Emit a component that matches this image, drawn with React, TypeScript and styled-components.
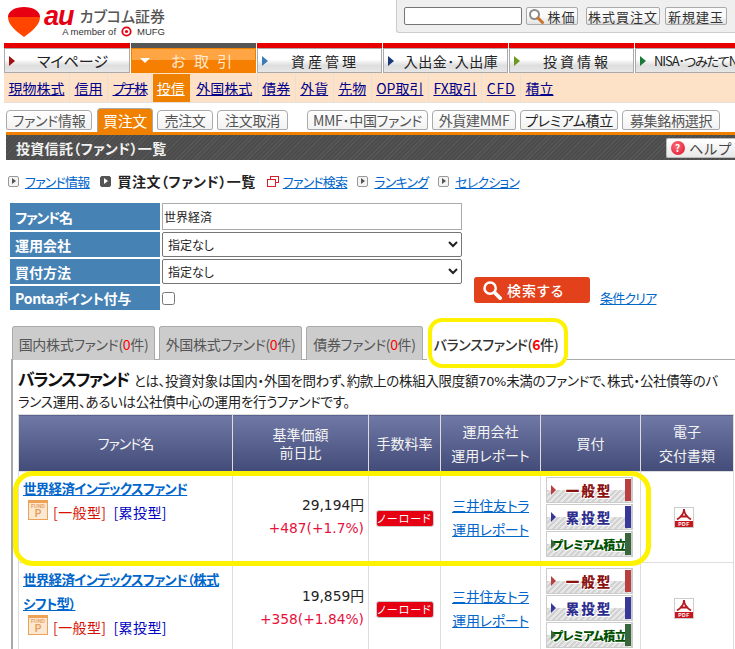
import React from 'react';
import styled, { createGlobalStyle } from 'styled-components';

const GlobalStyle = createGlobalStyle`
  html, body {
    margin: 0;
    padding: 0;
    background: #fff;
    overflow: hidden;
  }
  body {
    font-family: "Noto Sans CJK JP", "Liberation Sans", sans-serif;
    font-feature-settings: "palt";
    font-size: 14px;
    color: #222;
  }
  * {
    box-sizing: border-box;
  }
`;

const Page = styled.div`
  width: 735px;
  height: 649px;
  overflow: hidden;
`;

const Header = styled.header`
  height: 43px;
  display: flex;
  justify-content: space-between;
  align-items: flex-start;
  padding-left: 8px;
`;

const Logo = styled.div`
  display: flex;
  gap: 4px;
  padding-top: 7px;
`;

const LogoText = styled.div`
  display: flex;
  flex-direction: column;
  align-items: flex-end;
  width: 121px;
`;

const BrandRow = styled.div`
  display: flex;
  align-items: center;
  height: 18px;
  width: 100%;
  justify-content: space-between;
`;

const AuMark = styled.span`
  font-family: "Liberation Sans", sans-serif;
  font-size: 27px;
  font-style: italic;
  font-weight: 700;
  line-height: 18px;
  letter-spacing: -1px;
  color: #e60012;
`;

const BrandName = styled.span`
  font-size: 15px;
  font-weight: 500;
  color: #555;
  line-height: 18px;
`;

const MemberRow = styled.div`
  display: flex;
  align-items: center;
  gap: 3px;
  margin-top: 1px;
  font-family: "Liberation Sans", sans-serif;
  font-size: 9.5px;
  line-height: 11px;
  color: #333;
`;

const SearchPanel = styled.div`
  width: 339px;
  height: 33px;
  display: flex;
  align-items: flex-start;
  padding: 7px 0 0 7px;
  background: #efefef;
  border-left: 1px solid #ccc;
  border-bottom: 1px solid #ccc;
  border-bottom-left-radius: 3px;
`;

const CodeInput = styled.input`
  width: 118px;
  height: 18px;
  padding: 0 3px;
  background: #fff;
  border: 1px solid #767676;
  border-radius: 2px;
`;

const PanelButton = styled.div<{ $left: number; $width: number }>`
  display: flex;
  align-items: center;
  justify-content: center;
  gap: 3px;
  width: ${(p) => p.$width}px;
  height: 18px;
  margin-left: ${(p) => p.$left}px;
  font-size: 13px;
  letter-spacing: 1px;
  color: #333;
  background: linear-gradient(#fafafa 50%, #e2e2e2);
  border: 1px solid #aaa;
  border-radius: 2px;
`;

const MainNav = styled.nav`
  display: flex;
  gap: 1px;
  height: 30px;
  padding-left: 4px;
`;

const NavItem = styled.div<{ $active?: boolean }>`
  position: relative;
  flex: 0 0 125px;
  display: flex;
  align-items: center;
  gap: 8px;
  padding-left: 5px;
  border-top: 5px solid ${(p) => (p.$active ? '#555' : '#e60000')};
  box-shadow: inset 0 0 0 1px ${(p) => (p.$active ? '#f08000' : '#aaa')};
  background: ${(p) =>
    p.$active
      ? 'linear-gradient(#ffa544 50%, #f67f02 50%)'
      : 'linear-gradient(#fff, #fff 45%, #dedede 70%, #e8e8e8)'};

  &:first-child {
    flex-basis: 126px;
  }
`;

const NavArrow = styled.span<{ $color: string; $down?: boolean }>`
  flex: none;
  width: 0;
  height: 0;
  border-style: solid;
  ${(p) =>
    p.$down
      ? `border-width: 5px 5px 0 5px; border-color: ${p.$color} transparent transparent transparent; margin-left: 4px;`
      : `border-width: 5px 0 5px 6px; border-color: transparent transparent transparent ${p.$color};`}
`;

const NavLabel = styled.span<{ $active?: boolean; $spacing: number; $size: number }>`
  flex: 1;
  text-align: center;
  white-space: nowrap;
  padding-right: 8px;
  font-size: ${(p) => p.$size}px;
  letter-spacing: ${(p) => p.$spacing}px;
  color: ${(p) => (p.$active ? '#ffe9d0' : '#222')};
`;

const SubNav = styled.div`
  display: flex;
  align-items: center;
  height: 30px;
  margin-left: 4px;
  background: #fde2c8;
  border-bottom: 1px solid #e8e0d8;
`;

const SubItem = styled.a<{ $active?: boolean; $spacing?: number }>`
  display: flex;
  align-items: center;
  height: 28px;
  margin: 0 ${(p) => (p.$active ? '2px 0 1px' : '0')};
  padding: 0 ${(p) => (p.$active ? 4 : 4.5)}px;
  border-right: 1px solid ${(p) => (p.$active ? 'transparent' : '#e6e0da')};
  font-size: 14px;
  letter-spacing: ${(p) => p.$spacing ?? 0}px;
  text-decoration: underline;
  white-space: nowrap;
  color: ${(p) => (p.$active ? '#fff' : '#00008b')};
  background: ${(p) => (p.$active ? '#f08000' : 'transparent')};

  &:last-child {
    border-right: none;
  }
`;

const SubTabs = styled.div`
  display: flex;
  align-items: flex-end;
  height: 29px;
  padding-left: 6px;
`;

const SubTab = styled.div<{ $active?: boolean; $width: number; $gapLeft?: number; $dark?: boolean }>`
  display: flex;
  align-items: center;
  justify-content: center;
  width: ${(p) => p.$width}px;
  height: ${(p) => (p.$active ? 24 : 20)}px;
  margin-left: ${(p) => p.$gapLeft ?? 4}px;
  margin-bottom: ${(p) => (p.$active ? 0 : 2)}px;
  font-size: ${(p) => (p.$active ? 15 : 14)}px;
  letter-spacing: -0.3px;
  white-space: nowrap;
  color: ${(p) => (p.$active ? '#fff' : p.$dark ? '#222' : '#555')};
  background: ${(p) => (p.$active ? '#f08000' : 'linear-gradient(#fff, #f2f2f2)')};
  border: 1px solid #aaa;
  border-bottom: ${(p) => (p.$active ? 'none' : '1px solid #aaa')};
  border-radius: 4px ${(p) => (p.$active ? '4px 0 0' : '4px 2px 2px')};

  &:first-child {
    margin-left: 0;
  }
`;

const TitleBar = styled.div`
  display: flex;
  align-items: center;
  justify-content: space-between;
  height: 28px;
  margin-left: 6px;
  padding-left: 10px;
  border-top: 3px solid #f08000;
  background: repeating-linear-gradient(135deg, #4c4c4c 0 2px, #575757 2px 3px);
`;

const PageTitle = styled.h1`
  margin: 0;
  font-size: 14px;
  font-weight: 700;
  letter-spacing: 0.3px;
  color: #f2f2f2;
`;

const HelpButton = styled.div`
  display: flex;
  align-items: center;
  gap: 4px;
  width: 69px;
  height: 20px;
  padding-left: 4px;
  font-size: 14px;
  letter-spacing: 1px;
  white-space: nowrap;
  color: #444;
  background: linear-gradient(#fff, #e8e8e8);
  border: 1px solid #bbb;
  border-right: none;
  border-radius: 2px 0 0 2px;
`;

const HelpDot = styled.span`
  display: flex;
  align-items: center;
  justify-content: center;
  width: 14px;
  height: 14px;
  font-size: 10px;
  font-weight: 700;
  color: #fff;
  background: radial-gradient(circle at 40% 35%, #ff6b7a, #d8102a);
  border-radius: 50%;
`;

const Breadcrumbs = styled.div`
  display: flex;
  align-items: center;
  height: 43px;
  padding: 0 0 1px 8px;
  white-space: nowrap;
`;

const CrumbIcon = styled.span<{ $dark?: boolean; $left: number }>`
  display: flex;
  align-items: center;
  justify-content: center;
  width: 11px;
  height: 11px;
  margin: 0 6px 0 ${(p) => p.$left}px;
  background: ${(p) => (p.$dark ? '#555' : '#f4f4f4')};
  border: 1px solid ${(p) => (p.$dark ? '#555' : '#999')};
  border-radius: 2px;

  &::after {
    content: '';
    border-style: solid;
    border-width: 3px 0 3px 4px;
    border-color: transparent transparent transparent ${(p) => (p.$dark ? '#fff' : '#555')};
  }
`;

const WindowIcon = styled.svg`
  flex: none;
  margin: 0 4px 0 11px;
`;

const TextLink = styled.a`
  font-size: 13px;
  letter-spacing: -0.8px;
  color: #0066cc;
  text-decoration: underline;
`;

const CrumbCurrent = styled.b`
  font-size: 14px;
  font-weight: 700;
  letter-spacing: 0.5px;
  color: #222;
`;

const FormArea = styled.div`
  display: flex;
  padding-left: 10px;
`;

const FormGrid = styled.div`
  display: grid;
  grid-template-columns: 150px 300px;
  grid-template-rows: 27px 25px 25px 24px;
  column-gap: 2px;
  row-gap: 2px;
`;

const FieldLabel = styled.div<{ $spacing?: number }>`
  display: flex;
  align-items: center;
  padding-left: 5px;
  font-size: 14px;
  font-weight: 700;
  letter-spacing: ${(p) => p.$spacing ?? 0}px;
  color: #fff;
  background: #4682b4;
`;

const TextField = styled.input`
  width: 100%;
  height: 100%;
  padding: 0 1px;
  font: inherit;
  font-size: 12px;
  color: #222;
  border: 1px solid #aaa;
  outline: none;
`;

const SelectField = styled.select`
  width: 100%;
  height: 100%;
  padding: 0 0 0 1px;
  font: inherit;
  font-size: 12px;
  color: #222;
  background: #fff;
  border: 1px solid #767676;
  border-radius: 2px;
`;

const CheckCell = styled.div`
  display: flex;
  align-items: center;
`;

const CheckBox = styled.input`
  width: 13px;
  height: 13px;
  margin: 0;
`;

const SearchButton = styled.div`
  display: flex;
  align-items: center;
  gap: 5px;
  width: 116px;
  height: 26px;
  margin: 74px 0 0 12px;
  padding-left: 8px;
  font-size: 14px;
  font-weight: 500;
  letter-spacing: 1px;
  color: #fff;
  background: #e2411c;
  border-radius: 3px;
`;

const ClearLink = styled(TextLink)`
  margin: 85px 0 0 10px;
  white-space: nowrap;
`;

const FundTabs = styled.div`
  display: flex;
  gap: 4px;
  margin-top: 16px;
  padding-left: 12px;
`;

const FundTab = styled.div<{ $active?: boolean; $width: number }>`
  position: relative;
  z-index: 1;
  display: flex;
  align-items: center;
  justify-content: center;
  width: ${(p) => p.$width}px;
  height: 34px;
  margin-bottom: -1px;
  font-size: 14px;
  font-weight: ${(p) => (p.$active ? 500 : 400)};
  letter-spacing: -0.35px;
  white-space: nowrap;
  color: ${(p) => (p.$active ? '#333' : '#555')};
  background: ${(p) => (p.$active ? '#fff' : '#ccc')};
  border: 1px solid ${(p) => (p.$active ? 'transparent' : '#aaa')};
  border-bottom: none;
  border-radius: 3px 3px 0 0;
`;

const RedCount = styled.span<{ $bold?: boolean }>`
  font-weight: ${(p) => (p.$bold ? 700 : 400)};
  color: #f00;
`;

const TabCallout = styled.span`
  position: absolute;
  top: -9px;
  right: -4px;
  bottom: -8px;
  left: 0;
  border: 4px solid #fff200;
  border-radius: 14px;
  pointer-events: none;
`;

const Panel = styled.section`
  margin-left: 11px;
  padding: 10px 0 0 5px;
  border-top: 1px solid #aaa;
  border-left: 2px solid #aaa;
`;

const Intro = styled.p`
  margin: 0 0 2px;
  font-size: 13.5px;
  letter-spacing: -0.3px;
  line-height: 21px;
  white-space: nowrap;
  overflow: hidden;
`;

const IntroTitle = styled.b`
  font-size: 17px;
  font-weight: 700;
  line-height: 1;
  letter-spacing: -1.5px;
  margin-right: 5px;
  color: #111;
`;

const IntroLatin = styled.span`
  font-family: "DejaVu Sans", sans-serif;
  font-size: 13px;
  line-height: 1;
`;

const TableWrap = styled.div`
  position: relative;
`;

const FundTable = styled.table`
  width: 715px;
  table-layout: fixed;
  border-collapse: collapse;
`;

const HeadCell = styled.th<{ $width: number; $lines?: number; $spacing?: number }>`
  width: ${(p) => p.$width}px;
  height: 57px;
  padding: 0;
  font-size: 14px;
  font-weight: 400;
  letter-spacing: ${(p) => p.$spacing ?? 0}px;
  line-height: ${(p) => p.$lines ?? 24}px;
  color: #f4f4f4;
  text-align: center;
  background: linear-gradient(#7079a6, #434b78);
  border: 1px solid #ddd;
`;

const Row = styled.tr<{ $height: number }>`
  height: ${(p) => p.$height}px;
`;

const Cell = styled.td<{ $align?: string; $top?: boolean }>`
  padding: ${(p) => (p.$top ? '4px 0 0 4px' : '0 4px')};
  text-align: ${(p) => p.$align ?? 'center'};
  vertical-align: ${(p) => (p.$top ? 'top' : 'middle')};
  border: 1px solid #ddd;
`;

const FundName = styled.a`
  display: block;
  font-size: 13.5px;
  font-weight: 700;
  letter-spacing: -0.7px;
  line-height: 24px;
  white-space: nowrap;
  color: #0066cc;
  text-decoration: underline;
`;

const FundMeta = styled.div`
  display: flex;
  align-items: flex-end;
  margin: 0 0 0 5px;
`;

const FundBadge = styled.span`
  position: relative;
  flex: none;
  display: flex;
  flex-direction: column;
  align-items: center;
  width: 20px;
  height: 20px;
  margin-right: 5px;
  color: #e8a060;
  background: #fbe8d2;
  border-top: 3px solid #eea255;
  border-right: 1px solid #eea255;
  border-left: 1px solid #eea255;
  border-bottom: 1px solid #eea255;
  font-family: "Liberation Sans", sans-serif;
  font-weight: 700;
`;

const FundBadgeTop = styled.span`
  font-size: 5px;
  line-height: 6px;
`;

const FundBadgeMain = styled.span`
  font-size: 10px;
  line-height: 9px;
`;

const TypeLink = styled.span<{ $color: string }>`
  margin-right: 7px;
  font-size: 14px;
  letter-spacing: 0.4px;
  line-height: 16px;
  white-space: nowrap;
  color: ${(p) => p.$color};
`;

const Price = styled.div`
  font-family: "DejaVu Sans", "Noto Sans CJK JP", sans-serif;
  font-size: 13.8px;
  line-height: 23px;
  color: #222;
`;

const Change = styled.div`
  font-family: "DejaVu Sans", sans-serif;
  font-size: 13.8px;
  line-height: 23px;
  color: #e8103c;
`;

const NoLoad = styled.span`
  display: inline-block;
  width: 58px;
  height: 17px;
  font-size: 11px;
  line-height: 14px;
  letter-spacing: 1px;
  color: #fff;
  background: #e60012;
  border: 1px solid #ccc;
  border-radius: 3px;
`;

const CompanyLink = styled.a`
  display: block;
  font-size: 14px;
  letter-spacing: -0.3px;
  line-height: 24px;
  color: #0066cc;
  text-decoration: underline;
`;

const BuyStack = styled.div`
  display: flex;
  flex-direction: column;
  gap: 1px;
  width: 87px;
  margin: 0 auto;
  transform: translateX(-1px);
`;

const BuyButton = styled.div<{ $color: string; $strip: string; $size: number; $spacing: number }>`
  position: relative;
  display: flex;
  align-items: center;
  justify-content: center;
  height: 26px;
  padding: 0 6px;
  font-size: ${(p) => p.$size}px;
  font-weight: 900;
  letter-spacing: ${(p) => p.$spacing}px;
  white-space: nowrap;
  color: ${(p) => p.$color};
  text-shadow: 1px 0 #fff, -1px 0 #fff, 0 1px #fff, 0 -1px #fff, 1px 1px #fff, -1px -1px #fff;
  background:
    linear-gradient(#fff 50%, transparent 50%),
    repeating-linear-gradient(135deg, #d2d2d2 0 2px, #e8e8e8 2px 4px);
  border: 1px solid #ccc;
  border-width: 1px 2px 1px 1px;

  &::before {
    content: '';
    position: absolute;
    left: 4px;
    top: 7px;
    border-style: solid;
    border-width: 5px 0 5px 5px;
    border-color: transparent transparent transparent ${(p) => p.$strip};
  }

  &::after {
    content: '';
    position: absolute;
    top: 1px;
    right: 0;
    bottom: 1px;
    width: 6px;
    background: ${(p) => p.$strip};
  }
`;

const RowCallout = styled.div`
  position: absolute;
  top: 57px;
  left: -5px;
  width: 638px;
  height: 95px;
  border: 5px solid #fff200;
  border-radius: 20px;
  pointer-events: none;
`;

const PdfIcon = styled.span`
  display: inline-flex;
  flex-direction: column;
  width: 20px;
  height: 21px;
  margin-right: 6px;
  vertical-align: middle;
  background: #fff;
  border: 1px solid #ccc;
`;

const PdfBand = styled.span`
  height: 6px;
  font-family: "Liberation Sans", sans-serif;
  font-size: 5px;
  font-weight: 700;
  line-height: 6px;
  letter-spacing: 0.5px;
  color: #fff;
  background: #c8161d;
`;

function SearchGlass({ size, color }: { size: number; color: string }) {
  return (
    <svg width={size} height={size} viewBox="0 0 16 16" fill="none">
      <circle cx="6.5" cy="6.5" r="4.5" stroke={color} strokeWidth="2" fill={color === '#fff' ? 'none' : '#fff'} />
      <path d="M10 10l4.5 4.5" stroke={color === '#fff' ? '#fff' : '#c8742a'} strokeWidth="3" strokeLinecap="round" />
    </svg>
  );
}

function Fund({ title }: { title: React.ReactNode }) {
  return (
    <>
      <FundName>{title}</FundName>
      <FundMeta>
        <FundBadge>
          <FundBadgeTop>FUND</FundBadgeTop>
          <FundBadgeMain>P</FundBadgeMain>
        </FundBadge>
        <TypeLink $color="#d81000">[一般型]</TypeLink>
        <TypeLink $color="#0000c0">[累投型]</TypeLink>
      </FundMeta>
    </>
  );
}

function BuyButtons() {
  return (
    <BuyStack>
      <BuyButton $color="#8b1010" $strip="#b84040" $size={13.5} $spacing={2}>一般型</BuyButton>
      <BuyButton $color="#2e2e8e" $strip="#38389a" $size={13.5} $spacing={2}>累投型</BuyButton>
      <BuyButton $color="#005000" $strip="#38663a" $size={12} $spacing={-0.6}>プレミアム積立</BuyButton>
    </BuyStack>
  );
}

function Pdf() {
  return (
    <PdfIcon>
      <svg width="18" height="13" viewBox="0 0 18 13" fill="none">
        <path d="M9 1c0 4-3 8-7 10.5M9 1c0 4 3 8 7 10.5M5 8.5h8" stroke="#b51a20" strokeWidth="1.8" />
      </svg>
      <PdfBand>PDF</PdfBand>
    </PdfIcon>
  );
}

const navItems = [
  { label: 'マイページ', arrow: '#a01010', size: 15, spacing: 0 },
  { label: 'お 取 引', arrow: '#fff', size: 15, spacing: 2.5, active: true },
  { label: '資産管理', arrow: '#3a7ab8', size: 14, spacing: 3 },
  { label: '入出金･入出庫', arrow: '#1a3a7a', size: 14, spacing: 0.5 },
  { label: '投資情報', arrow: '#6a9a20', size: 14, spacing: 3 },
  { label: 'NISA･つみたてNISA', arrow: '#1a7a3a', size: 13, spacing: -1.1 },
];

const subItems = ['現物株式', '信用', 'プチ株', '投信', '外国株式', '債券', '外貨', '先物', 'OP取引', 'FX取引', 'CFD', '積立'];
const subSpacing: Record<string, number> = { プチ株: -2, CFD: 0.8 };

export default function App() {
  return (
    <Page>
      <GlobalStyle />
      <Header>
        <Logo>
          <svg width="32" height="30" viewBox="0 0 32 30">
            <path d="M0 10C0 4 7 0 16 0s16 4 16 10H0z" fill="#e60012" />
            <path d="M0 10h32c0 8-8 14-16 20C8 24 0 18 0 10z" fill="#ff4500" />
          </svg>
          <LogoText>
            <BrandRow>
              <AuMark>au</AuMark>
              <BrandName>カブコム証券</BrandName>
            </BrandRow>
            <MemberRow>
              A member of
              <svg width="15" height="11" viewBox="0 0 15 11">
                <circle cx="7.5" cy="5.5" r="4.2" fill="none" stroke="#e60012" strokeWidth="1.8" />
                <circle cx="7.5" cy="5.5" r="1.6" fill="#e60012" />
              </svg>
              MUFG
            </MemberRow>
          </LogoText>
        </Logo>
        <SearchPanel>
          <CodeInput />
          <PanelButton $left={4} $width={52}>
            <SearchGlass size={16} color="#8a8a8a" />
            株価
          </PanelButton>
          <PanelButton $left={8} $width={74}>株式買注文</PanelButton>
          <PanelButton $left={5} $width={62}>新規建玉</PanelButton>
        </SearchPanel>
      </Header>

      <MainNav>
        {navItems.map((item) => (
          <NavItem key={item.label} $active={item.active}>
            <NavArrow $color={item.arrow} $down={item.active} />
            <NavLabel $active={item.active} $size={item.size} $spacing={item.spacing}>
              {item.label}
            </NavLabel>
          </NavItem>
        ))}
      </MainNav>

      <SubNav>
        {subItems.map((item) => (
          <SubItem key={item} $active={item === '投信'} $spacing={subSpacing[item]}>{item}</SubItem>
        ))}
      </SubNav>

      <SubTabs>
        <SubTab $width={86}>ファンド情報</SubTab>
        <SubTab $width={56} $active $gapLeft={5}>買注文</SubTab>
        <SubTab $width={56}>売注文</SubTab>
        <SubTab $width={71}>注文取消</SubTab>
        <SubTab $width={121} $gapLeft={19}>MMF･中国ファンド</SubTab>
        <SubTab $width={84}>外貨建MMF</SubTab>
        <SubTab $width={98} $dark>プレミアム積立</SubTab>
        <SubTab $width={98}>募集銘柄選択</SubTab>
      </SubTabs>

      <TitleBar>
        <PageTitle>投資信託（ファンド）一覧</PageTitle>
        <HelpButton>
          <HelpDot>?</HelpDot>
          ヘルプ
        </HelpButton>
      </TitleBar>

      <Breadcrumbs>
        <CrumbIcon $left={0} />
        <TextLink>ファンド情報</TextLink>
        <CrumbIcon $dark $left={11} />
        <CrumbCurrent>買注文（ファンド）一覧</CrumbCurrent>
        <WindowIcon width="12" height="11" viewBox="0 0 12 11" fill="none">
          <rect x="3.5" y="0.5" width="8" height="6" fill="#fff" stroke="#d8202a" />
          <rect x="0.5" y="3.5" width="8" height="7" fill="#fff" stroke="#d8202a" />
        </WindowIcon>
        <TextLink>ファンド検索</TextLink>
        <CrumbIcon $left={10} />
        <TextLink>ランキング</TextLink>
        <CrumbIcon $left={10} />
        <TextLink>セレクション</TextLink>
      </Breadcrumbs>

      <FormArea>
        <FormGrid>
          <FieldLabel $spacing={-1.2}>ファンド名</FieldLabel>
          <TextField readOnly value="世界経済" />
          <FieldLabel>運用会社</FieldLabel>
          <SelectField><option>指定なし</option></SelectField>
          <FieldLabel>買付方法</FieldLabel>
          <SelectField><option>指定なし</option></SelectField>
          <FieldLabel $spacing={-0.3}>Pontaポイント付与</FieldLabel>
          <CheckCell><CheckBox type="checkbox" /></CheckCell>
        </FormGrid>
        <SearchButton>
          <SearchGlass size={20} color="#fff" />
          検索する
        </SearchButton>
        <ClearLink>条件クリア</ClearLink>
      </FormArea>

      <FundTabs>
        <FundTab $width={143}>国内株式ファンド(<RedCount>0</RedCount>件)</FundTab>
        <FundTab $width={143}>外国株式ファンド(<RedCount>0</RedCount>件)</FundTab>
        <FundTab $width={117}>債券ファンド(<RedCount>0</RedCount>件)</FundTab>
        <FundTab $width={138} $active>
          バランスファンド(<RedCount $bold>6</RedCount>件)
          <TabCallout />
        </FundTab>
      </FundTabs>

      <Panel>
        <Intro>
          <IntroTitle>バランスファンド</IntroTitle>
          とは、投資対象は国内・外国を問わず、約款上の株組入限度額<IntroLatin>70%</IntroLatin>未満のファンドで、株式・公社債等のバ
          <br />
          ランス運用、あるいは公社債中心の運用を行うファンドです。
        </Intro>
        <TableWrap>
          <FundTable>
            <thead>
              <tr>
                <HeadCell $width={214} $spacing={-1}>ファンド名</HeadCell>
                <HeadCell $width={136} $lines={18}>基準価額<br />前日比</HeadCell>
                <HeadCell $width={72}>手数料率</HeadCell>
                <HeadCell $width={100}>運用会社<br />運用レポート</HeadCell>
                <HeadCell $width={100}>買付</HeadCell>
                <HeadCell $width={93}>電子<br />交付書類</HeadCell>
              </tr>
            </thead>
            <tbody>
              <Row $height={91}>
                <Cell $align="left" $top><Fund title="世界経済インデックスファンド" /></Cell>
                <Cell $align="right">
                  <Price>29,194円</Price>
                  <Change>+487(+1.7%)</Change>
                </Cell>
                <Cell><NoLoad>ノーロード</NoLoad></Cell>
                <Cell>
                  <CompanyLink>三井住友トラ</CompanyLink>
                  <CompanyLink>運用レポート</CompanyLink>
                </Cell>
                <Cell><BuyButtons /></Cell>
                <Cell><Pdf /></Cell>
              </Row>
              <Row $height={91}>
                <Cell $align="left" $top>
                  <Fund title={<>世界経済インデックスファンド（株式<br />シフト型）</>} />
                </Cell>
                <Cell $align="right">
                  <Price>19,859円</Price>
                  <Change>+358(+1.84%)</Change>
                </Cell>
                <Cell><NoLoad>ノーロード</NoLoad></Cell>
                <Cell>
                  <CompanyLink>三井住友トラ</CompanyLink>
                  <CompanyLink>運用レポート</CompanyLink>
                </Cell>
                <Cell><BuyButtons /></Cell>
                <Cell><Pdf /></Cell>
              </Row>
            </tbody>
          </FundTable>
          <RowCallout />
        </TableWrap>
      </Panel>
    </Page>
  );
}
